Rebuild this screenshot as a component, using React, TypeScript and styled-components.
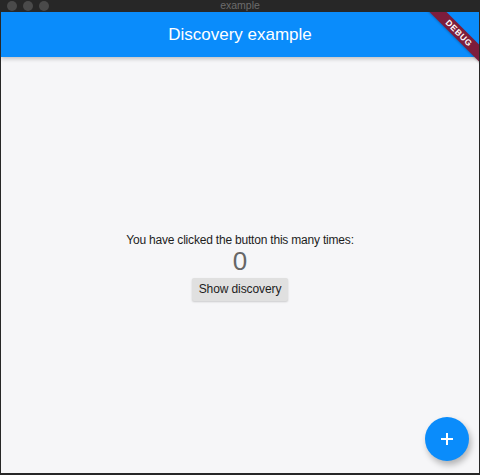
import React from "react";
import styled, { createGlobalStyle } from "styled-components";

const Global = createGlobalStyle`
  html, body { margin: 0; padding: 0; background: #262626; }
  body { font-family: "Liberation Sans", Arial, sans-serif; }
  #root { width: 480px; height: 475px; }
`;

const Window = styled.div`
  width: 480px;
  height: 475px;
  display: flex;
  flex-direction: column;
  background: #272727;
  overflow: hidden;
`;

const TitleBar = styled.div`
  height: 12px;
  flex: none;
  display: flex;
  align-items: center;
  position: relative;
  padding-left: 7px;
  gap: 6px;
`;

const Light = styled.span`
  width: 10px;
  height: 10px;
  border-radius: 50%;
  background: #4a4a4a;
`;

const WindowTitle = styled.div`
  position: absolute;
  left: 0;
  right: 0;
  top: 0;
  text-align: center;
  font-size: 10.5px;
  line-height: 11px;
  color: #6c6c6c;
`;

const Surface = styled.div`
  flex: 1;
  display: flex;
  flex-direction: column;
  margin: 0 1px 2px 1px;
  background: #f6f6f8;
  position: relative;
  overflow: hidden;
`;

const AppBar = styled.header`
  height: 45px;
  flex: none;
  background: #0a8cfb;
  display: flex;
  align-items: center;
  justify-content: center;
  color: #fff;
  font-size: 17px;
  font-weight: 500;
  box-shadow: 0 2px 4px rgba(0, 0, 0, 0.22);
  position: relative;
  z-index: 1;
`;

const Body = styled.main`
  flex: 1;
  display: flex;
  flex-direction: column;
  align-items: center;
  justify-content: center;
  padding-top: 2px;
`;

const Caption = styled.div`
  font-size: 12px;
  letter-spacing: -0.2px;
  color: #1d1d1d;
  line-height: 16px;
`;

const Count = styled.div`
  font-size: 26px;
  color: #666;
  line-height: 25px;
  margin-top: 1px;
`;

const Button = styled.button`
  margin-top: 4px;
  height: 23px;
  padding: 0 7px;
  border: none;
  border-radius: 2px;
  background: #e0e0e0;
  color: #1d1d1d;
  font-family: inherit;
  font-size: 12px;
  letter-spacing: -0.1px;
  box-shadow: 0 1px 2px rgba(0, 0, 0, 0.18);
`;

const Fab = styled.button`
  position: absolute;
  right: 10px;
  bottom: 12px;
  width: 44px;
  height: 44px;
  border-radius: 50%;
  border: none;
  background: #0a8cfb;
  display: flex;
  align-items: center;
  justify-content: center;
  box-shadow: 2px 4px 6px rgba(0, 0, 0, 0.28);
  padding: 0;
`;

const Banner = styled.div`
  position: absolute;
  left: 408px;
  top: 15px;
  width: 100px;
  height: 12px;
  background: #7d1d3c;
  transform: rotate(45deg);
  color: #fff;
  font-size: 8.5px;
  font-weight: 700;
  letter-spacing: 0.6px;
  display: flex;
  align-items: center;
  justify-content: center;
  z-index: 2;
  box-shadow: 0 1px 2px rgba(0, 0, 0, 0.2);
`;

export default function App() {
  return (
    <>
      <Global />
      <Window>
        <TitleBar>
          <Light />
          <Light />
          <Light />
          <WindowTitle>example</WindowTitle>
        </TitleBar>
        <Surface>
          <AppBar>Discovery example</AppBar>
          <Body>
            <Caption>You have clicked the button this many times:</Caption>
            <Count>0</Count>
            <Button>Show discovery</Button>
          </Body>
          <Fab>
            <svg width="14" height="14" viewBox="0 0 14 14">
              <path d="M7 1v12M1 7h12" stroke="#fff" strokeWidth="2" />
            </svg>
          </Fab>
          <Banner>DEBUG</Banner>
        </Surface>
      </Window>
    </>
  );
}
